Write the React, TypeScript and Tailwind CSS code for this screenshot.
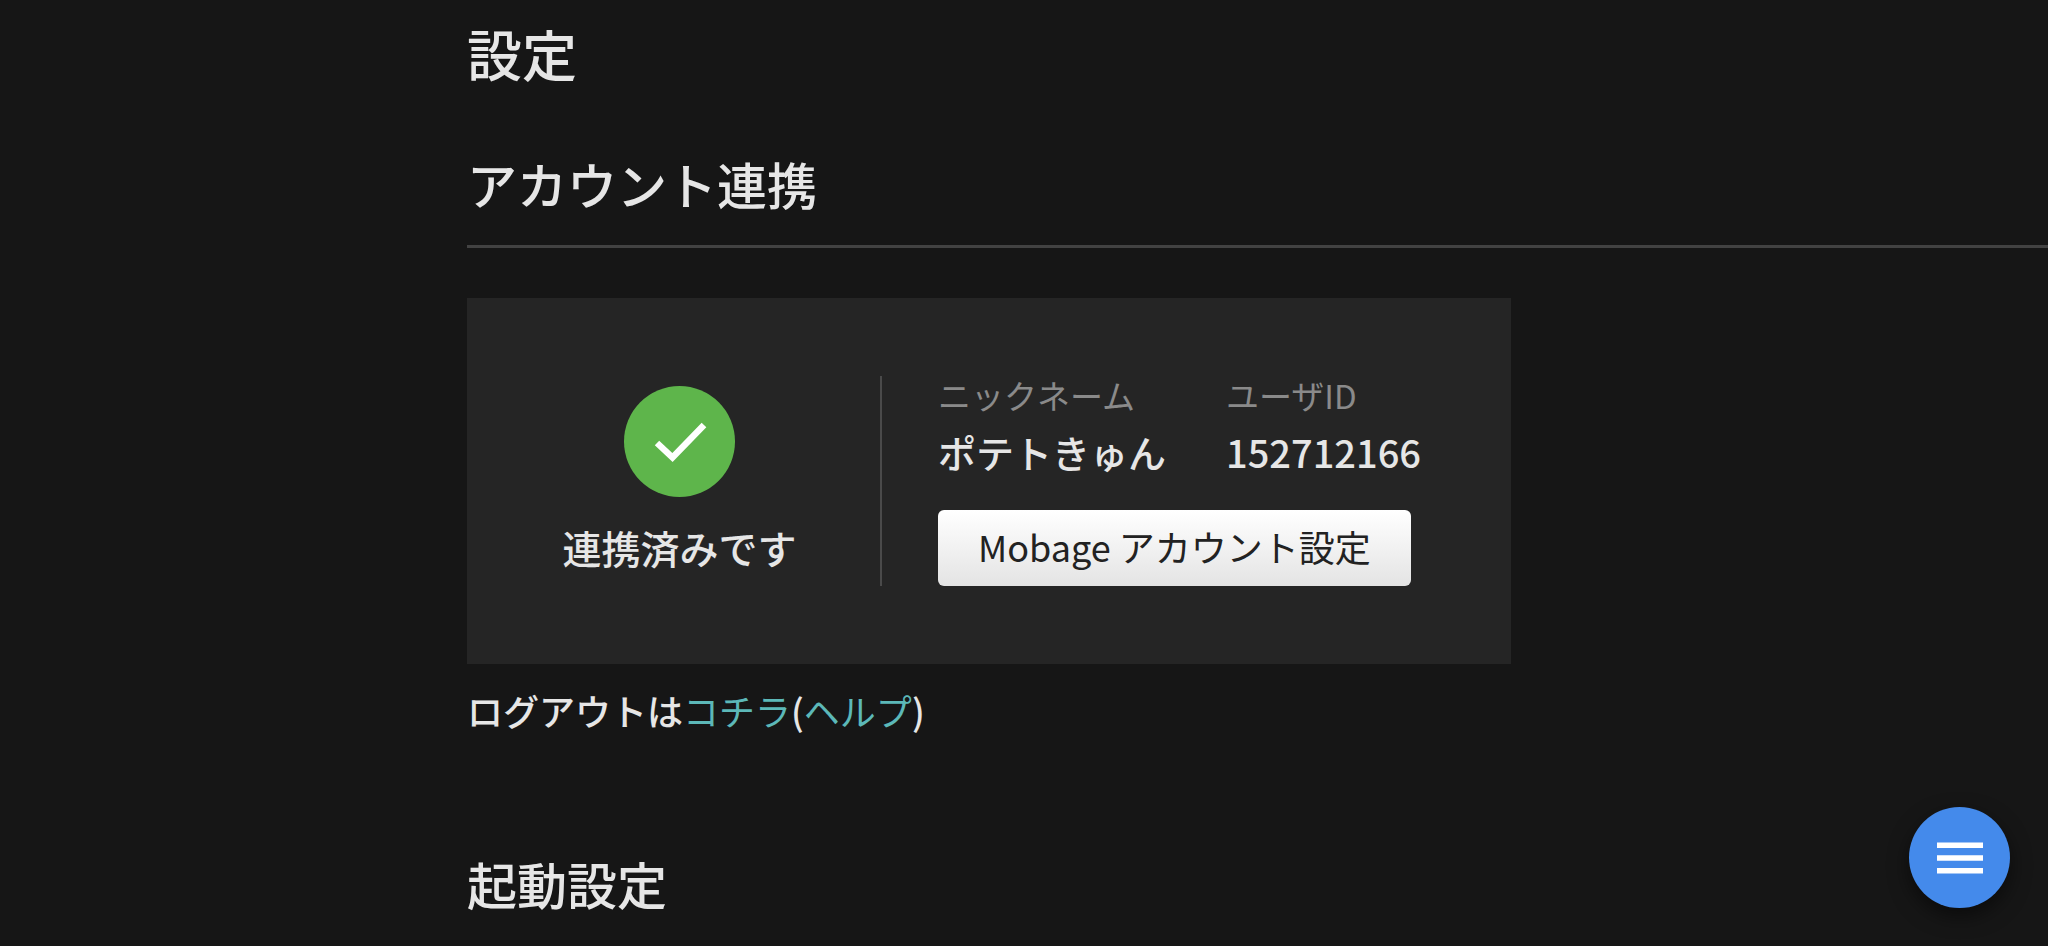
import type { ReactNode } from 'react';

function SectionHeading({ children }: { children: ReactNode }) {
  return (
    <h2 className="border-b-3 border-[#424242] pb-8 text-[50px] leading-[60px] font-medium">
      {children}
    </h2>
  );
}

function AccountField({ label, value }: { label: string; value: string }) {
  return (
    <div>
      <dt className="text-[33px] leading-[38px] text-[#8a8a8a]">{label}</dt>
      <dd className="mt-3 text-[38px] leading-[52px] font-medium">{value}</dd>
    </div>
  );
}

function LinkedAccountCard() {
  return (
    <div className="flex w-fit items-center bg-[#252525] py-[78px] pr-[90px]">
      <div className="flex w-[413px] flex-col items-center pb-1 pl-3">
        <svg className="size-[111px]" viewBox="0 0 111 111" aria-hidden="true">
          <circle cx="55.5" cy="55.5" r="55.5" fill="#5eb54b" />
          <path d="M33 57 48.5 71.5 80 39" fill="none" stroke="#fff" strokeWidth="6.5" />
        </svg>
        <p className="mt-6 text-[39px] leading-[52px] font-medium">連携済みです</p>
      </div>
      <div className="flex flex-col items-start border-l-2 border-[#4a4a4a] pl-14">
        <dl className="flex gap-[60px]">
          <AccountField label="ニックネーム" value="ポテトきゅん" />
          <AccountField label="ユーザID" value="152712166" />
        </dl>
        <button
          type="button"
          className="mt-8 h-[76px] rounded-md bg-linear-to-b from-white to-[#e4e4e4] px-10 pb-1 text-[36px] leading-[52px] text-[#222]"
        >
          Mobage アカウント設定
        </button>
      </div>
    </div>
  );
}

export default function App() {
  return (
    <div
      lang="ja"
      className="min-h-screen bg-[#161616] font-['Noto_Sans_CJK_JP',sans-serif] text-[#e6e6e6]"
    >
      <main className="pt-4 pl-[467px]">
        <h1 className="text-[55px] leading-[72px] font-medium">設定</h1>

        <section className="mt-[65px]">
          <SectionHeading>アカウント連携</SectionHeading>
          <div className="mt-[50px]">
            <LinkedAccountCard />
          </div>
          <p className="mt-5 text-[36px] leading-[52px] font-medium">
            ログアウトは
            <a href="#logout" className="font-normal text-[#5cb8b8]">コチラ</a>
            (<a href="#help" className="font-normal text-[#5cb8b8]">ヘルプ</a>)
          </p>
        </section>

        <section className="mt-[117px]">
          <h2 className="text-[50px] leading-[60px] font-medium">起動設定</h2>
        </section>
      </main>

      {/* Floating menu button */}
      <button
        type="button"
        aria-label="メニュー"
        className="fixed right-[38px] bottom-[38px] flex size-[101px] items-center justify-center rounded-full bg-[#448aeb] shadow-[0_8px_20px_rgba(0,0,0,0.5)]"
      >
        <svg className="h-8 w-[46px]" viewBox="0 0 46 32" fill="#fff" aria-hidden="true">
          <rect y="0.5" width="46" height="5.5" />
          <rect y="13.25" width="46" height="5.5" />
          <rect y="26" width="46" height="5.5" />
        </svg>
      </button>
    </div>
  );
}
